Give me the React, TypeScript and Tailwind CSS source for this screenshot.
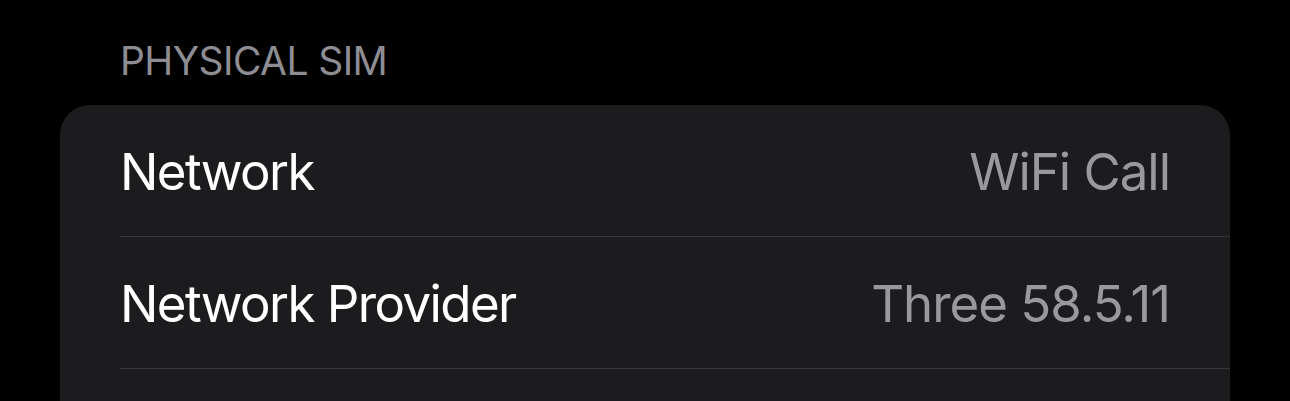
import React from "react";

const rows = [
  { label: "Network", value: "WiFi Call" },
  { label: "Network Provider", value: "Three 58.5.11" },
  { label: "", value: "" },
];

export default function App() {
  return (
    <div className="w-full h-[401px] overflow-hidden bg-black font-['Inter',sans-serif]">
      <div className="pt-[37px] px-[60px]">
        <h2 className="pl-[60px] text-[39px] leading-[48px] text-[#8d8d93] uppercase tracking-[-0.015em] mb-[20px]">
          Physical Sim
        </h2>

        <div className="rounded-[30px] bg-[#1c1c1e] overflow-hidden">
          {rows.map((row, index) => (
            <div className="pl-[60px]" key={index}>
              <div className="flex h-[132px] items-center justify-between border-b border-[#38383a] pt-[4px] pr-[60px]">
                <span className="text-[51px] text-white tracking-[-0.031em]">
                  {row.label}
                </span>
                <span className="text-[51px] text-[#98989f] tracking-[-0.02em]">
                  {row.value}
                </span>
              </div>
            </div>
          ))}
        </div>
      </div>
    </div>
  );
}
